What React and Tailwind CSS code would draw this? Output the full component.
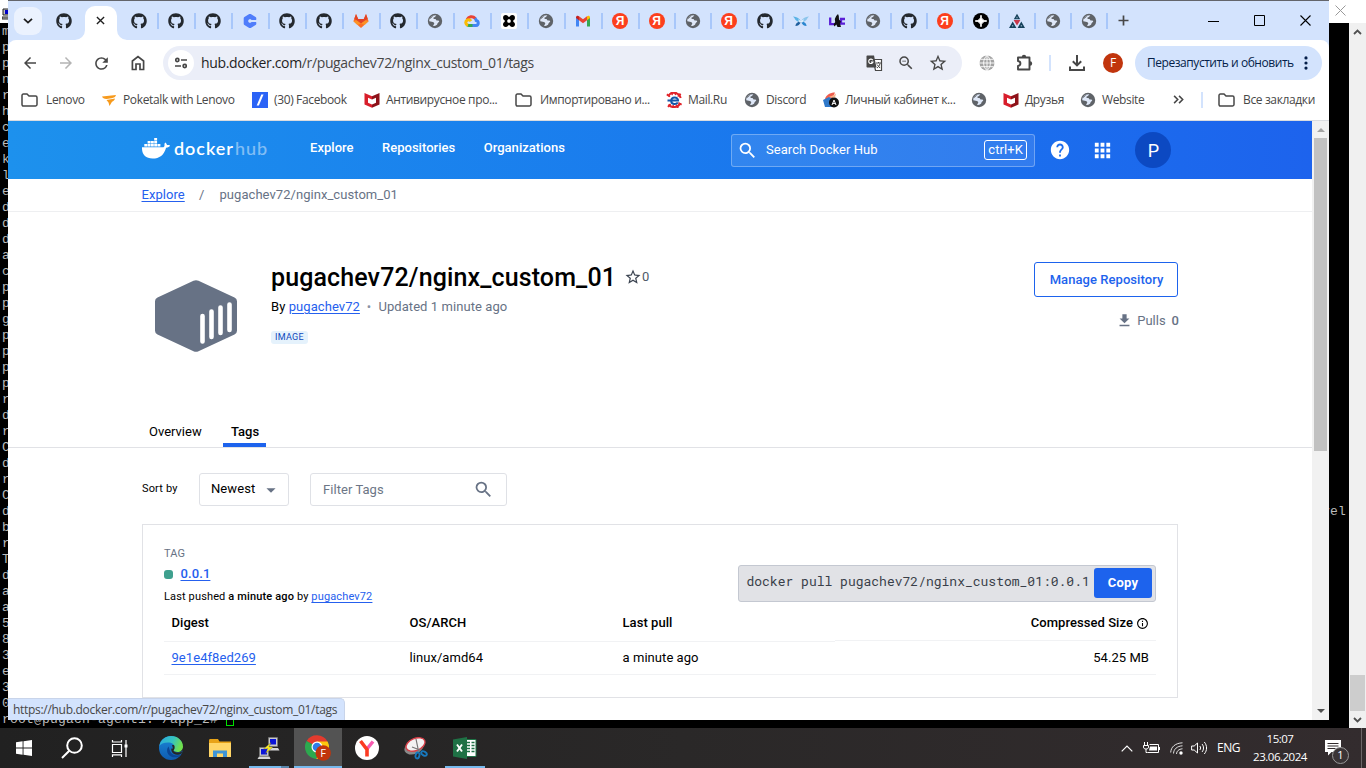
import React from "react";
import { FaGithub } from "react-icons/fa";
import {
  MdArrowBack, MdArrowForward, MdRefresh, MdZoomOut, MdStarOutline,
  MdSearch, MdHelp, MdApps, MdFileDownload, MdArrowDropDown, MdInfoOutline,
} from "react-icons/md";

const ui = "font-['Open_Sans','Noto_Sans',sans-serif]";

/* ---------- favicons ---------- */
const Github = () => <FaGithub className="size-4 text-[#24292f]" />;

const Globe = () => (
  <svg viewBox="0 0 16 16" className="size-4 shrink-0">
    <circle cx="8" cy="8" r="7.2" fill="#5f6368" />
    <path d="M9.600 2.300C8.400 2.600 8.800 3.600 8 4c-.9.300-1.700.4-1.600 1.300.1.800 1.200.6 1.900.8.800.3.700 1.200 1.500 1.400.9.200 2-.2 2.300.6.300 1-.7 1.300-1.300 1.900-.6.700-.4 1.700-1.300 2.100-.9.500-1.900 1.100-2.900.9-.9-.3-.2-1.100.2-1.600.5-.6.7-1.400 0-1.900C5.700 8.700 4 9 2.300 8.300 1.900 5 5 1.700 9.600 2.300z" fill="#dfe8f8" />
    <path d="M2.600 6.200c.8-.3 1.300-.9 1.900-1.500.5-.6 1-1 1.700-1.300-.9-.5-3.300.8-3.600 2.800z" fill="#5f6368" />
  </svg>
);

const Coursera = () => (
  <svg viewBox="0 0 16 16" className="size-4">
    <path d="M8 2.400 12.800 5.200v1L10 6.600 8 5.500 5.800 6.800v2.500L8 10.500l2-1.100 2.800.4v1L8 13.600l-4.800-2.800V5.200z" fill="#4f7dfb" stroke="#4f7dfb" strokeWidth="3" strokeLinejoin="round" />
    <path d="M8 6 9.700 7H16v2H9.700L8 10 6.300 9V7z" fill="#d3e3fd" />
  </svg>
);

const Gitlab = () => (
  <svg viewBox="0 0 16 16" className="size-4">
    <path d="M3 1 5.200 6h5.600L13 1l2.600 7.200L8 15 .4 8.200z" fill="#fc6d26" />
    <path d="M3 1 5.200 6h5.600L13 1l1.700 4.700L8 10.500 1.300 5.700z" fill="#e24329" />
    <path d="M.4 8.200 3.600 7.300 8 10.500 4.300 12z" fill="#fca326" opacity=".7" />
    <path d="M15.600 8.200 12.400 7.300 8 10.500l3.700 1.500z" fill="#fca326" opacity=".7" />
  </svg>
);

const GCloud = () => (
  <svg viewBox="0 0 16 16" className="size-4">
    <g fill="none" strokeWidth="3">
      <path d="M3.200 6.400C4.500 3.700 8.500 2.400 11.300 5.600" stroke="#ea4335" />
      <path d="M11 5.300c.8.800 1.100 1.500 1.200 2.200 2.600.3 2.900 4.700-.2 5H8" stroke="#4285f4" />
      <path d="M8.500 12.500H5c-.7 0-1.400-.2-1.900-.6" stroke="#34a853" />
      <path d="M4 12.300C1.300 11.500.9 8 3.600 7c1.300-.4 2.600 0 3.400 1.200" stroke="#fbbc04" />
    </g>
  </svg>
);

const Knot = () => (
  <svg viewBox="0 0 16 16" className="size-4">
    <rect width="16" height="16" rx="2" fill="#fff" />
    <path d="M5 5h6v6H5z" fill="none" stroke="#000" strokeWidth="2.600" />
    <circle cx="4.700" cy="4.700" r="2.600" fill="#000" /><circle cx="11.300" cy="4.700" r="2.600" fill="#000" />
    <circle cx="4.700" cy="11.300" r="2.600" fill="#000" /><circle cx="11.300" cy="11.300" r="2.600" fill="#000" />
  </svg>
);

const Gmail = () => (
  <svg viewBox="0 0 16 16" className="size-4">
    <path d="M1 13.500V4h3v9.500z" fill="#4285f4" />
    <path d="M12 13.500V4h3v9.500z" fill="#34a853" />
    <path d="M4 3.200 8 6.300l4-3.100v4L8 10.300 4 7.200z" fill="#ea4335" />
    <path d="M1 4.500C1 2.600 2.800 2.200 4 3.200v4L1 5z" fill="#c5221f" />
    <path d="M15 4.500c0-1.900-1.800-2.300-3-1.300v4L15 5z" fill="#fbbc04" />
  </svg>
);

const Yandex = () => (
  <span className="flex size-4 items-center justify-center rounded-full bg-[#fc3f1d] font-['Liberation_Sans',sans-serif] text-[12px] leading-4 font-bold text-white">Я</span>
);

const Butterfly = () => (
  <svg viewBox="0 0 16 16" className="size-4">
    <path d="M8 8.500C6.500 5.500 4 3.300 0 3.400c1.500 1 2 3 3.200 4.200C4.800 9 6.500 9 8 8.500z" fill="#5bb3e6" />
    <path d="M8 8.500C9.500 5.500 12 3.300 16 3.400c-1.500 1-2 3-3.200 4.200C11.200 9 9.500 9 8 8.500z" fill="#8cc5ec" />
    <path d="M8 8.500C5.500 8.500 3 9.500 2.400 13 5 13 7 11.500 8 8.500z" fill="#1f5f9e" />
    <path d="M8 8.500c2.500 0 5 1 5.600 4.500C11 13 9 11.500 8 8.500z" fill="#2a86cf" />
    <path d="M5 6.300 8 8l3-1.700L9.500 9.500h-3z" fill="#fff" opacity=".8" />
  </svg>
);

const Lc = () => (
  <svg viewBox="0 0 16 16" className="size-4">
    <path d="M1.200 4.500v6.700H6M16 6h-4v4.700h4" fill="none" stroke="#5a1fd6" strokeWidth="2.300" />
    <path d="M7.200 3 9 1l.8 2 .2 3.500L12 8.500l-1 2 1 3.500H8.500L7.300 11.500 5.500 13.500 4.600 11.500 6.200 9 5.800 6z" fill="#111" />
  </svg>
);

const Spark = () => (
  <svg viewBox="0 0 16 16" className="size-4">
    <circle cx="8" cy="8" r="8" fill="#000" />
    <path d="M8 2.200C8.300 6 10 7.700 13.800 8 10 8.300 8.300 10 8 13.800 7.700 10 6 8.300 2.200 8 6 7.700 7.700 6 8 2.200z" fill="#fff" stroke="#fff" />
  </svg>
);

const Triangles = () => (
  <svg viewBox="0 0 16 16" className="size-4">
    <path d="M8 .8l3.200 5.400H4.800zM3.700 8.600 7.400 15H0zM12.300 8.600 16 15H8.600z" fill="#16425b" />
    <path d="M4.600 7h6.800L8 12.600z" fill="#c8384a" />
    <path d="M8 3.800v1.500M3.700 12v1.500M12.300 12v1.500" stroke="#d3e3fd" strokeWidth=".7" />
  </svg>
);

/* ---------- browser chrome ---------- */
const tabsA = [Github, Github, Github, Coursera, Github, Github, Gitlab, Github, Globe, GCloud, Knot, Globe, Gmail, Yandex];
const tabsB = [Yandex, Globe, Yandex, Github, Butterfly, Lc, Globe, Github, Yandex, Spark, Triangles, Globe, Globe];

function TabStrip() {
  return (
    <div className="flex h-10 shrink-0 items-center border-t border-[#63656b] bg-[#d3e3fd]">
      <div className="ml-[6px] flex size-7 items-center justify-center rounded-[9px] bg-[#ebf2fe]">
        <svg viewBox="0 0 10 6" className="h-[6px] w-[10px]"><path d="M1 .8 5 4.600 9 .8" fill="none" stroke="#1f1f1f" strokeWidth="1.800" /></svg>
      </div>
      <div className="ml-[4px] flex w-[36px] justify-center"><Github /></div>
      <div className="relative mt-[5px] ml-[3px] flex h-[34px] w-8 items-center justify-center rounded-t-[10px] bg-white pb-[5px]">
        <svg viewBox="0 0 10 10" className="mr-[1px] size-[9px]"><path d="M1 1l8 8M9 1 1 9" stroke="#1f1f1f" strokeWidth="1.500" /></svg>
        <svg viewBox="0 0 10 10" className="absolute bottom-0 -left-[10px] size-[10px]"><path d="M10 0v10H0A10 10 0 0 0 10 0z" fill="#fff" /></svg>
        <svg viewBox="0 0 10 10" className="absolute -right-[10px] bottom-0 size-[10px]"><path d="M0 0v10h10A10 10 0 0 1 0 0z" fill="#fff" /></svg>
      </div>
      <div className="ml-[3px] flex items-center">
        {tabsA.map((Icon, i) => (
          <div key={i} className="flex h-4 w-[37px] items-center justify-center border-[#a8c7fa] pl-[1px] not-first:border-l-2 not-first:pr-[1px] not-first:pl-0"><Icon /></div>
        ))}
        {tabsB.map((Icon, i) => (
          <div key={i} className="flex h-4 w-[36px] items-center justify-center border-l-2 border-[#a8c7fa] pr-[1px]"><Icon /></div>
        ))}
        <div className="flex h-4 w-[36px] items-center justify-center border-l-2 border-[#a8c7fa] pr-[3px]">
          <svg viewBox="0 0 11 11" className="size-[11px]"><path d="M5.500.5v10M.5 5.500h10" stroke="#474747" strokeWidth="1.700" /></svg>
        </div>
      </div>
      <div className="mr-[18px] ml-auto flex items-center gap-[35px] text-black">
        <svg viewBox="0 0 11 11" className="size-[11px]"><path d="M0 6.500h11" stroke="currentColor" /></svg>
        <svg viewBox="0 0 11 11" className="size-[11px]"><path d="M.5.5h10v10H.5z" fill="none" stroke="currentColor" /></svg>
        <svg viewBox="0 0 11 11" className="size-[11px]"><path d="M.5.5l10 10M10.500.5l-10 10" stroke="currentColor" strokeWidth="1.100" /></svg>
      </div>
    </div>
  );
}

function Toolbar() {
  return (
    <div className="flex h-[46px] shrink-0 items-center bg-[#d3e3fd]">
      <div className="flex h-full grow items-center rounded-t-[8px] bg-white text-[#474747]">
        <MdArrowBack className="ml-[13px] size-[18px]" />
        <MdArrowForward className="ml-[18px] size-[18px] text-[#b4b4b4]" />
        <MdRefresh className="mr-[1px] ml-[17px] size-[19px]" />
        <svg viewBox="0 0 14 16" className="ml-[19px] h-4 w-[14px]" fill="none" stroke="currentColor" strokeWidth="1.700"><path d="M1.400 14.500V6L7 1.500 12.600 6v8.500H9V9H5v5.500z" /></svg>
        <div className="ml-[18px] flex h-[34px] w-[799px] items-center rounded-full bg-[#ebeef8]">
          <span className="ml-[5px] flex size-[26px] items-center justify-center rounded-full bg-white">
            <svg viewBox="0 0 12 12" className="size-3" fill="none" stroke="currentColor" strokeWidth="1.700"><circle cx="2.300" cy="3" r="1.600" /><path d="M6 3h6M0 9h6" /><circle cx="9.700" cy="9" r="1.600" /></svg>
          </span>
          <span className={`ml-[7px] pb-[1px] text-[14px] tracking-[-0.36px] whitespace-nowrap text-[#474747] ${ui}`}><span className="text-[#1f1f1f]">hub.docker.com</span>/r/pugachev72/nginx_custom_01/tags</span>
          <svg viewBox="0 0 17 17" className="ml-auto size-[17px]">
            <path d="M7 4.500h8.500v11H9.500z" fill="#fff" stroke="#474747" strokeWidth="1.200" />
            <path d="M1.500.5H8l2.500 12h-9c-.6 0-1-.4-1-1v-10c0-.6.4-1 1-1z" fill="#474747" />
            <path d="M6.800 5.200A2.200 2.200 0 1 0 7 7H5" fill="none" stroke="#fff" strokeWidth="1.100" />
            <path d="M10 8h5M12.500 7v1M11 9.500l3 3.500M14 8.500c-.5 2-1.500 3.500-3 4.500" fill="none" stroke="#474747" />
          </svg>
          <MdZoomOut className="ml-[14px] size-[18px]" />
          <MdStarOutline className="mr-[14px] ml-[13px] size-5" />
        </div>
        <svg viewBox="0 0 16 16" className="ml-[17px] size-4"><circle cx="8" cy="8" r="7.500" fill="#a3a3a3" /><path d="M8 0v16M0 8h16M1.500 4.300h13M1.500 11.700h13M8 .5C3.500 4 3.500 12 8 15.500M8 .5c4.500 3.500 4.500 11.500 0 15" fill="none" stroke="#fff" strokeWidth=".9" /></svg>
        <svg viewBox="0 0 18 18" className="ml-[21px] size-[18px]" fill="none" stroke="currentColor" strokeWidth="1.900"><path d="M2 3.500h11.500V15.500H2V12c1.500-.2 2.400-1.200 2.400-2.500S3.500 7.200 2 7z" strokeLinejoin="round" /><path d="M5.800 3a2.200 2.200 0 0 1 4.400 0zM14 7.300a2.200 2.200 0 0 1 0 4.400z" fill="currentColor" stroke="none" /></svg>
        <span className="ml-[15px] h-4 w-[2px] bg-[#d3e3fd]" />
        <svg viewBox="0 0 16 16" className="ml-[18px] size-4" fill="none" stroke="currentColor" strokeWidth="2"><path d="M8 0v10M3.800 6.200 8 10.400l4.200-4.200M1 11.500V15h14v-3.500" /></svg>
        <span className={`ml-[18px] flex size-5 items-center justify-center rounded-full bg-[#c1350d] text-[12px] text-white ${ui}`}>F</span>
        <div className={`ml-[12px] flex h-[34px] w-[187px] items-center justify-between rounded-full bg-[#d3e3fd] pr-[14px] pl-3 text-[12px] tracking-[-0.45px] whitespace-nowrap text-[#041e49] ${ui}`}>
          Перезапустить и обновить
          <svg viewBox="0 0 4 14" className="h-[14px] w-1" fill="currentColor"><circle cx="2" cy="1.900" r="1.600" /><circle cx="2" cy="7" r="1.600" /><circle cx="2" cy="12.100" r="1.600" /></svg>
        </div>
      </div>
    </div>
  );
}

const Folder = () => (
  <svg viewBox="0 0 17 14" className="-ml-[1px] h-[14px] w-[17px] shrink-0"><path d="M1 2.500C1 1.600 1.600 1 2.400 1H6l2 2h6.600c.8 0 1.400.6 1.400 1.400v7.200c0 .8-.6 1.400-1.400 1.400H2.400C1.600 13 1 12.400 1 11.600z" fill="none" stroke="#474747" strokeWidth="1.500" /></svg>
);
const Poke = () => (
  <svg viewBox="0 0 16 16" className="size-4 shrink-0"><path d="M1 4.500 15 3c-.4 1.800-2 3-4.500 3.200L5.500 7C3 7 1.500 6 1 4.500z" fill="#f79a1c" /><path d="M5.500 8 14 6.500c-.5 1.700-1.500 2.600-3 3.200L8.500 14 7.500 10.500z" fill="#f79a1c" /></svg>
);
const Slash = () => (
  <svg viewBox="0 0 16 16" className="size-4 shrink-0"><path d="M0 0h16v16H0z" fill="#2b63f6" /><path d="M9.300 2.500h2.200L6.900 13.500H4.700z" fill="#fff" /></svg>
);
const Mcafee = () => (
  <svg viewBox="0 0 16 16" className="size-4 shrink-0"><path d="M.5 1 8 4.300v3.200L4 5.700v5.100l4 1.700V15.800L.5 12.500z" fill="#d81e2b" /><path d="M15.500 1 8 4.300v3.200l4-1.800v5.100l-4 1.700v3.300l7.500-3.300z" fill="#8e1219" /></svg>
);
const MailRu = () => (
  <svg viewBox="0 0 16 16" className="size-4 shrink-0"><path d="M2 4.200A7 7 0 0 1 14.700 6M14.300 11A7 7 0 0 1 2.500 12.500" fill="none" stroke="#e2232a" strokeWidth="2" /><path d="M2 4.200A7 7 0 0 1 14.700 6M14.300 11A7 7 0 0 1 2.500 12.500" fill="none" stroke="#e2232a" strokeWidth="4" strokeDasharray="1.600 2.400" /><path d="M1.500 8.600h10.600c0-4.300-6.900-4.300-6.900.2 0 4 5 4 6.600 1.700" fill="none" stroke="#1556a8" strokeWidth="2" /></svg>
);
const Cabinet = () => (
  <svg viewBox="0 0 16 16" className="size-4 shrink-0"><path d="M2 7c1-4 5-6.500 10-6.500L9 7z" fill="#ef5c4c" /><path d="M4 5.500c3-1 6-1.500 9-4l-1 4z" fill="#f7b58e" /><path d="M0 8l6-3 5 3v7H2z" fill="#2f78c9" /><circle cx="11" cy="10.500" r="5" fill="#111" /><path d="M9 13l2-5 2 5M9.800 11.400h2.400" fill="none" stroke="#fff" /></svg>
);

const bookmarks = [
  [Folder, "Lenovo", "w-[79px]", "gap-[8px]"],
  [Poke, "Poketalk with Lenovo", "w-[151px]", "gap-[6px]"],
  [Slash, "(30) Facebook", "w-[112px]", "gap-[6px]"],
  [Mcafee, "Антивирусное про...", "w-[152px]", "gap-[6px]"],
  [Folder, "Импортировано и...", "w-[150px]", "gap-[8px]"],
  [MailRu, "Mail.Ru", "w-[78px]", "gap-[6px]"],
  [Globe, "Discord", "w-[79px]", "gap-[6px]"],
  [Cabinet, "Личный кабинет к...", "w-[148px]", "gap-[6px]"],
  [Globe, "", "w-[32px]", "gap-0"],
  [Mcafee, "Друзья", "w-[77px]", "gap-[6px]"],
  [Globe, "Website", "w-[92px]", "gap-[6px]"],
];

function Bookmarks() {
  return (
    <div className={`flex h-[35px] shrink-0 items-center border-b border-[#dadce0] bg-white pb-[7px] text-[12px] whitespace-nowrap text-[#474747] tracking-[-0.36px] ${ui}`}>
      <div className="ml-[14px] flex">
        {bookmarks.map(([Icon, label, w, gap], i) => (
          <div key={i} className={`flex shrink-0 items-center ${w} ${gap}`}><Icon />{label}</div>
        ))}
      </div>
      <svg viewBox="0 0 10 8" className="ml-[1px] h-[9px] w-[11px]" fill="none" stroke="#474747" strokeWidth="1.400"><path d="M1 .7 4.300 4 1 7.300M5.500.7 8.800 4 5.500 7.300" /></svg>
      <span className="ml-[17px] h-4 w-[2px] bg-[#d3e3fd]" />
      <span className="ml-[16px] flex items-center gap-[8px]"><Folder />Все закладки</span>
    </div>
  );
}

/* ---------- page ---------- */
const Whale = () => (
  <svg viewBox="0 0 28 22" className="h-[22px] w-7" fill="#fff">
    <path d="M0 10.200h20.600c1.300 0 2-.7 1.900-2-.1-1-.1-1.900.7-2.800 1.100.8 1.700 1.600 1.800 2.700 1.100-.2 2.300-.1 3 .4-.5 1.400-1.900 2.200-3.900 2.200C22 18 17.600 21.500 10.500 21.500 3.500 21.500-.3 17.400 0 10.200z" />
    <path d="M2.300 7h2.900v2.500H2.300zM5.600 7h2.900v2.500H5.600zM8.900 7h2.900v2.500H8.900zM12.200 7h2.900v2.500h-2.900zM15.500 7h2.900v2.500h-2.900zM5.600 4.100h2.900v2.500H5.600zM8.900 4.100h2.900v2.500H8.900zM12.200 4.100h2.900v2.500h-2.900zM12.200 1.100h2.900v2.500h-2.900z" />
  </svg>
);

function PageHeader() {
  return (
    <header className="flex h-[58px] shrink-0 items-center bg-linear-to-r from-[#1d91ed] to-[#1d63ed] pl-[134px] text-[13px] font-medium tracking-[0.04px] text-white">
      <div className="flex w-[168px] items-center pb-[4px]">
        <Whale />
        <span className="ml-[4px] font-['Lato',sans-serif] text-[18px] leading-[22px] font-semibold tracking-[0.95px]">docker<span className="ml-[1px] font-medium opacity-45">hub</span></span>
      </div>
      <nav className="flex gap-[28.300px] pb-[4px]"><a>Explore</a><a>Repositories</a><a>Organizations</a></nav>
      <div className="ml-auto flex h-[33px] w-[304px] items-center rounded-[3px] border border-white/30 bg-white/10 pr-[7px] pl-[5px] font-normal tracking-[0.06px]">
        <MdSearch className="size-[21px]" />
        <span className="ml-[8px]">Search Docker Hub</span>
        <span className="ml-auto flex h-5 items-center rounded-[3px] border border-white px-[3px] tracking-[0.1px]">ctrl+K</span>
      </div>
      <MdHelp className="ml-[14px] size-[22px]" />
      <MdApps className="ml-[20px] size-[23px]" />
      <span className="mr-[141px] ml-[21px] flex size-9 items-center justify-center rounded-full bg-[#0c49c2] pl-[1px] text-[18px] font-normal">P</span>
    </header>
  );
}

const link = "text-[#2560ee] underline underline-offset-2";

function Hero() {
  return (
    <section className="flex h-[236px] shrink-0 flex-col border-b border-[#e1e2e6]">
      <div className="flex grow">
        <svg viewBox="0 0 82 72" className="mt-[68px] ml-[147px] h-[72px] w-[82px]">
          <path d="M38.500.8a5.500 5.500 0 0 1 5 0l36 16.700a4 4 0 0 1 2.500 3.700v29.600a4 4 0 0 1-2.500 3.700l-36 16.700a5.500 5.500 0 0 1-5 0l-36-16.700A4 4 0 0 1 0 50.800V21.200a4 4 0 0 1 2.500-3.700z" fill="#677285" />
          <path d="M47.500 36v25.500M56.500 31.500V57M65.500 27.500V53M74.500 24.500V50" stroke="#fff" strokeWidth="4.600" strokeLinecap="round" />
        </svg>
        <div className="ml-[34px] flex flex-col items-start text-[13px] leading-5">
          <div className="mt-[49px] flex h-8 items-center">
            <h1 className="pt-[1px] text-[25px] leading-8 font-medium tracking-[0.12px]">pugachev72/nginx_custom_01</h1>
            <MdStarOutline className="ml-[8px] size-[18px] text-[#3b4350]" /><span className="text-[#505a69]">0</span>
          </div>
          <p className="mt-[4px] flex tracking-[0.07px] text-black">By&nbsp;<a className={link}>pugachev72</a><span className="w-[18px] text-center text-[#8993a5]">•</span><span className="pl-[0.500px] text-[#677285]">Updated 1 minute ago</span></p>
          <span className="mt-[14px] rounded-[3px] bg-[#e5f2fc] px-[4px] text-[9px] leading-[13px] tracking-[0.28px] text-[#0f49bd]">IMAGE</span>
        </div>
        <div className="mr-[134px] ml-auto flex flex-col items-end text-[13px]">
          <button className="mt-[50px] flex h-[35px] w-[144px] items-center justify-center rounded-[3px] border border-[#1d63ed] pl-[1px] font-medium tracking-[0.06px] whitespace-nowrap text-[#1d63ed]">Manage Repository</button>
          <span className="mt-[14px] -mr-[1px] flex items-center text-[#677285]"><MdFileDownload className="mr-[4px] size-[17px]" />Pulls<span className="ml-[6px] font-medium">0</span></span>
        </div>
      </div>
      <div className="ml-[141px] flex h-[28px] text-[13px] leading-[25px]">
        <span className="w-[74px]">Overview</span>
        <span className="h-full border-b-4 border-[#1d63ed] pr-[7px] pl-[8px] font-medium">Tags</span>
      </div>
    </section>
  );
}

function TagsSection() {
  return (
    <section className="mr-[134px] ml-[134px]">
      <div className="flex h-[76px] items-center pt-[7px] text-[13px]">
        <span className="w-[57px] text-[11px] tracking-[0.16px]">Sort by</span>
        <div className="flex h-[33px] w-[90px] items-center justify-between rounded-[3px] border border-[#dfe1e6] pr-[6px] pb-[2px] pl-[11px] tracking-[0.1px]">Newest<MdArrowDropDown className="mt-[2px] size-[22px] text-[#677285]" /></div>
        <div className="ml-[21px] flex h-[33px] w-[197px] items-center justify-between rounded-[3px] border border-[#dfe1e6] pr-[12px] pl-[12px] text-[#6c7686] tracking-[0.05px]">Filter Tags<MdSearch className="size-[21px] text-[#677285]" /></div>
      </div>
      <div className="h-[174px] border border-[#e1e2e6] px-[21px] pt-[20px]">
        <div className="flex h-[62px]">
          <div className="flex grow flex-col text-[11px]">
            <span className="pt-[1px] leading-4 tracking-[0.1px] text-[#677285]">TAG</span>
            <span className="mt-[2px] flex items-center leading-5"><i className="size-[9px] rounded-[3px] bg-[#3fa08e]" /><a className={`ml-[7.500px] text-[13px] font-medium tracking-[0.1px] ${link}`}>0.0.1</a></span>
            <p className="mt-[5px] leading-4 tracking-[0.14px]">Last pushed <b className="font-medium">a minute ago</b> by <a className={link}>pugachev72</a></p>
          </div>
          <div className="mt-[20px] flex h-[37px] w-[418px] items-center justify-between rounded-[3px] border border-[#c4c8d1] bg-[#e1e2e6] pr-[3px] pb-[1px] pl-[7.500px]">
            <code className="pb-[3px] font-['Roboto_Mono','Liberation_Mono',monospace] text-[13px] tracking-[0px] whitespace-nowrap text-[#393f49]">docker pull pugachev72/nginx_custom_01:0.0.1</code>
            <span className="flex h-[30px] w-[58px] items-center justify-center rounded-[3px] bg-[#1d63ed] text-[13px] font-bold tracking-[0.2px] text-white">Copy</span>
          </div>
        </div>
        <div className="grid grid-cols-[238px_213px_220px_1fr] items-start text-[13px] tracking-[0.06px]">
          {["Digest", "OS/ARCH", "Last pull"].map((h) => <span key={h} className="h-[35px] border-b border-[#f1f2f4] pl-[7.500px] leading-[32px] font-medium">{h}</span>)}
          <span className="flex h-[34px] items-center justify-end gap-[3px] border-b border-[#f1f2f4] pr-[7px] pb-[1px] font-medium">Compressed Size<MdInfoOutline className="size-[13px]" /></span>
          <span className="h-[33px] border-b border-[#f1f2f4] pl-[7.500px] leading-[32px]"><a className={link}>9e1e4f8ed269</a></span>
          <span className="h-[33px] border-b border-[#f1f2f4] pl-[7.500px] leading-[32px]">linux/amd64</span>
          <span className="h-[33px] border-b border-[#f1f2f4] pl-[7.500px] leading-[32px]">a minute ago</span>
          <span className="h-[33px] border-b border-[#f1f2f4] pr-[7px] text-right leading-[32px]">54.25 MB</span>
        </div>
      </div>
    </section>
  );
}

function BrowserWindow() {
  return (
    <div className="absolute top-0 left-[8px] flex h-[720px] w-[1321px] flex-col overflow-hidden bg-white">
      <TabStrip /><Toolbar /><Bookmarks />
      <div className="flex min-h-0 grow">
        <main className="flex grow flex-col overflow-hidden font-['Roboto',sans-serif] text-black">
          <PageHeader />
          <div className="flex h-[33px] shrink-0 items-center border-b border-[#eeeff1] pl-[133.500px] text-[13px] tracking-[0.05px] text-[#677285]">
            <a className={`w-[57.500px] ${link}`}>Explore</a><span className="w-[20.500px]">/</span>pugachev72/nginx_custom_01
          </div>
          <Hero />
          <TagsSection />
        </main>
        <div className="flex w-[17px] shrink-0 flex-col items-center bg-[#f1f1f1]">
          <span className="flex h-[17px] items-center"><svg viewBox="0 0 8 4" className="h-1 w-2"><path d="M4 0l4 4H0z" fill="#a3a3a3" /></svg></span>
          <span className="h-[313px] w-[13px] bg-[#c1c1c1]" />
          <span className="mt-auto flex h-[18px] items-center"><svg viewBox="0 0 8 4" className="h-1 w-2"><path d="M4 4l4-4H0z" fill="#505050" /></svg></span>
        </div>
      </div>
      <div className={`absolute bottom-0 left-0 flex h-[22px] w-[337px] items-center rounded-tr-[5px] border-t border-r border-[#c8d4ea] bg-[#d3e3fd] pl-[5px] text-[12px] tracking-[-0.3px] whitespace-nowrap text-[#474747] ${ui}`}>https://hub.docker.com/r/pugachev72/nginx_custom_01/tags</div>
    </div>
  );
}

/* ---------- terminal behind the browser ---------- */
const lines = "m p p n r h c e k l e d d d a c p p g p p p p r d r C d r C d b r T d a a 5 8 3 e 3 0".split(" ");

function Terminal() {
  return (
    <div className="flex h-[728px] flex-col overflow-hidden bg-black">
      <div className="flex h-[23px] shrink-0 items-center justify-between bg-white pl-[2px]">
        <svg viewBox="0 0 8 12" className="mt-[4px] h-3 w-2"><path d="M1 7V1h7v6zM0 9h8v2H0z" fill="#c0c0c0" stroke="#222" /><path d="M3 2h5v4H3z" fill="#0000c8" /></svg>
        <svg viewBox="0 0 11 11" className="mr-[20px] mb-[3px] size-[11px]"><path d="M.5.5l10 10M10.500.5l-10 10" stroke="#999" /></svg>
      </div>
      <div className="flex min-h-0 grow justify-between font-['Liberation_Mono',monospace] text-[13px] leading-4 tracking-[0.2px] text-[#bbb]">
        <div className="pt-[1px] pl-[2px]">
          {lines.map((c, i) => <div key={i} className="h-4">{c}</div>)}
          <div className="flex h-4 whitespace-pre">root@pugach-agent1:~/app_2# <span className="h-[14px] w-[8px] border border-[#00e000]" /></div>
        </div>
        <div className="flex">
          <span className="mt-[481px] mr-[3px]">vel</span>
          <div className="flex w-[17px] flex-col items-center bg-[#f0f0f0] text-[#505050]">
            <svg viewBox="0 0 9 6" className="mt-[6px] h-[6px] w-[9px]"><path d="M1 5l3.500-3.500L8 5" fill="none" stroke="currentColor" strokeWidth="1.800" /></svg>
            <span className="mt-auto h-[36px] w-[15px] bg-[#cdcdcd]" />
            <svg viewBox="0 0 9 6" className="mt-[6px] mb-[5px] h-[6px] w-[9px]"><path d="M1 1l3.500 3.500L8 1" fill="none" stroke="currentColor" strokeWidth="1.800" /></svg>
          </div>
        </div>
      </div>
    </div>
  );
}

/* ---------- taskbar ---------- */
const WinLogo = () => <svg viewBox="0 0 16 16" className="size-4"><path d="M0 2.200 6.600 1.300v6.200H0zM7.500 1.200 16 0v7.500H7.500zM0 8.500h6.600v6.200L0 13.800zM7.500 8.500H16V16l-8.500-1.200z" fill="#fff" /></svg>;
const Search = () => <svg viewBox="0 0 22 22" className="size-[22px]" fill="none" stroke="#fff" strokeWidth="2"><circle cx="13.500" cy="8.500" r="7.300" /><path d="M8.300 13.800 1 21" /></svg>;
const TaskView = () => <svg viewBox="0 0 18 17" className="h-[17px] w-[18px]" fill="none" stroke="#fff" strokeWidth="1.200"><path d="M1.500 4.500h9v8h-9zM1.500 0v2h9V0M1.500 17v-2.200h9V17M15 0v17" /><path d="M13.500 4.500h3v3h-3z" fill="#fff" stroke="none" /></svg>;
const Edge = () => (
  <svg viewBox="0 0 24 24" className="size-6">
    <defs>
      <linearGradient id="eg1" x1="0" y1="0" x2="1" y2=".3"><stop offset="0" stopColor="#2aa8e0" /><stop offset=".6" stopColor="#36c4c0" /><stop offset="1" stopColor="#6fe04e" /></linearGradient>
      <linearGradient id="eg2" x1="0" y1="0" x2="0" y2="1"><stop offset="0" stopColor="#1b86d8" /><stop offset="1" stopColor="#0f5cb0" /></linearGradient>
    </defs>
    <circle cx="12" cy="12" r="12" fill="url(#eg2)" />
    <path d="M14.500 14.300c2 2.500 6 2.600 9.500.2V9H13z" fill="#262626" />
    <path d="M.3 10C1.500 3.800 6.500 0 12 0c7 0 12 5 12 10.500 0 3.500-2.600 5.500-5.500 5.500-2.700 0-4-1-4-1.700 0-.6 1.200-1.200 1.200-3.200C15.700 8.500 12.800 6.500 9 6.500 4.500 6.500 1.500 8.300.3 10z" fill="url(#eg1)" />
    <path d="M9.500 10.500c-3 3.500-1.200 9.700 4.500 10.700 3.300.6 6.300-.4 8.200-2.700-3.700 1.700-7.500 1-9.800-1.300-2-2-2-4.700-2.900-6.700z" fill="#0b4594" />
    <path d="M12.400 12.500c-.6 2.200.6 4.300 2.700 5.500 2.300 1.200 5.300.8 7.400-.6l1-2.400c-1.400 1.200-3.500 1.600-5.500 1.500-2.200-.2-3.300-1-3.500-1.800-.1-.6.600-1.300 1-2.200z" fill="#262626" />
  </svg>
);
const Explorer = () => <svg viewBox="0 0 22 19" className="h-[19px] w-[22px]"><path d="M0 1.500C0 .7.500 0 1.300 0H9l1.500 2.500H22V18H0z" fill="#e8a317" /><path d="M0 4h22v14H0z" fill="#ffd667" /><path d="M4 18v-6.500h14V18h-4v-3.500H8V18z" fill="#3f95d6" /></svg>;
const Putty = () => (
  <svg viewBox="0 0 24 24" className="size-6">
    <path d="M11.500 1.500h9v9h-9z" fill="#c9c9c9" stroke="#777" strokeWidth=".6" /><path d="M13 3h6v5.500h-6z" fill="#0a14d8" /><path d="M11 12h10l1.500 2.500H10z" fill="#d6d6d6" />
    <path d="M2.500 11.500h9v8.500h-9z" fill="#c9c9c9" stroke="#777" strokeWidth=".6" /><path d="M4 13h6v5.500H4z" fill="#0a14d8" /><path d="M2 20.500h10.500l1 2.500H.5z" fill="#d6d6d6" />
    <path d="M14 6.500 6.500 13l4.500-.5-2.500 5 7.500-6.500-4-.1z" fill="#ffee1a" stroke="#555" strokeWidth=".4" />
  </svg>
);
const Chrome = () => (
  <svg viewBox="0 0 26 26" className="size-[26px]">
    <path d="M12 12 1.600 6A12 12 0 0 1 22.400 6.500L22 7z" fill="#e33b2e" /><path d="M12 12 1.600 6a12 12 0 0 0 9.600 18L17 15z" fill="#2da94f" /><path d="M12 12V6.500h10.600A12 12 0 0 1 11.200 24l6-9z" fill="#fdc80f" />
    <circle cx="12" cy="12" r="5.500" fill="#fff" /><circle cx="12" cy="12" r="4.300" fill="#2f7de9" />
    <circle cx="18.200" cy="18" r="7.700" fill="#c1350d" />
    <text x="18.200" y="22" textAnchor="middle" fontSize="11" fill="#fff" fontFamily="Open Sans">F</text>
  </svg>
);
const YaBrowser = () => (
  <svg viewBox="0 0 24 24" className="size-6">
    <circle cx="12" cy="12" r="12" fill="#fff" /><path d="M11.500 13.500 18 5.500" stroke="#f65bb0" strokeWidth="3.400" /><path d="M5.500 5 12 13.500V20.500" fill="none" stroke="#fb3b22" strokeWidth="3.600" /></svg>
);
const Snip = () => (
  <svg viewBox="0 0 24 24" className="size-6"><ellipse cx="10" cy="11.500" rx="10" ry="6.500" transform="rotate(-22 10 11.500)" fill="#8a8a8a" /><ellipse cx="11.500" cy="8.500" rx="10" ry="6" transform="rotate(-22 11.500 8.500)" fill="#f3f3f3" stroke="#d8414a" strokeWidth="1.400" />
    <path d="M12 3l2.500 12M8 11l8 3" stroke="#777" strokeWidth="1.200" /><g fill="none" stroke="#1878bd" strokeWidth="1.900"><ellipse cx="13.500" cy="19.500" rx="1.900" ry="3" transform="rotate(15 13.500 19.500)" /><ellipse cx="20" cy="17.500" rx="3" ry="1.900" transform="rotate(30 20 17.500)" /></g></svg>
);
const Excel = () => (
  <svg viewBox="0 0 24 22" className="h-[22px] w-6"><path d="M12 2.500h11v17H12z" fill="#fff" stroke="#1f7145" /><path d="M14 5.500h3M18.500 5.500h3M14 8.500h3M18.500 8.500h3M14 11.500h3M18.500 11.500h3M14 14.500h3M18.500 14.500h3" stroke="#1f7145" strokeWidth="1.500" /><path d="M0 2.500 14 0v22L0 19.500z" fill="#1f7145" /><path d="M4 7.500l5 7M9 7.500l-5 7" stroke="#fff" strokeWidth="1.900" /></svg>
);

function Taskbar() {
  const cell = "flex h-full items-center justify-center";
  return (
    <div className={`flex h-10 items-center bg-linear-to-r from-[#212121] via-[#2a2828] to-[#332c2e] text-white ${ui}`}>
      <div className={`${cell} w-12`}><WinLogo /></div>
      <div className={`${cell} w-12`}><Search /></div>
      <div className={`${cell} w-12`}><TaskView /></div>
      <div className={`${cell} w-[54px]`}><Edge /></div>
      <div className={`${cell} w-[44px]`}><Explorer /></div>
      <div className={`${cell} ml-[7px] w-[32px] border-b-2 border-[#76b9ed] pt-[2px] pl-[8px]`}><Putty /></div>
      <div className="h-full w-[8px] border-b-2 border-[#5885aa]" />
      <div className={`${cell} ml-[5px] w-12 border-b-2 border-[#76b9ed] bg-[#535353] pt-[2px]`}><Chrome /></div>
      <div className={`${cell} w-[50px]`}><YaBrowser /></div>
      <div className={`${cell} w-[48px]`}><Snip /></div>
      <div className={`${cell} ml-[5px] w-[40px] border-b-2 border-[#76b9ed] pt-[2px]`}><Excel /></div>
      <svg viewBox="0 0 12 7" className="ml-auto h-[7px] w-3"><path d="M.7 6.300 6 1l5.300 5.300" fill="none" stroke="#fff" strokeWidth="1.200" /></svg>
      <svg viewBox="0 0 17 12" className="ml-[10px] h-3 w-[17px]" fill="none" stroke="#fff"><path d="M1.500 0v3M4.500 0v3M.5 3.500h5v1.500c0 1.500-1 2-2.500 2s-2.500-.5-2.500-2zM3 7v3.500h1.500M6.500 2.500h9v8h-11M16.500 5v3" /><path d="M7 4.500h7v4H6z" fill="#fff" stroke="none" /></svg>
      <svg viewBox="0 0 13 13" className="ml-[10px] h-[13px] w-[13px]" fill="none" stroke="#fff"><path d="M.7 10.500C1 5 5 1.200 12.500.8M3.500 11.500C3.800 7 7 4.200 12.500 3.800M6.500 12C6.800 9 8.500 7.200 12.500 6.800" opacity=".85" /><circle cx="11" cy="11" r="1.700" fill="#fff" stroke="none" /></svg>
      <svg viewBox="0 0 17 14" className="ml-[8px] h-[14px] w-[17px]" fill="none" stroke="#fff"><path d="M.6 5v4h2.600L6.500 12V2L3.200 5zM8.800 5c1 1.200 1 2.800 0 4M11 3c2 2.300 2 5.700 0 8M13.300 1c3 3.500 3 8.500 0 12" /></svg>
      <span className="ml-[9px] w-[36px] text-[12px] tracking-[-0.45px]">ENG</span>
      <div className="w-[54px] text-center text-[11.500px] leading-[18px] tracking-[-0.48px] whitespace-nowrap"><div>15:07</div><div>23.06.2024</div></div>
      <div className="relative mr-[4px] ml-[18px] flex h-full w-[37px] items-center border-r border-[#6c6668]">
        <svg viewBox="0 0 16 16" className="size-4"><path d="M0 0h16v12H6.500L3 15.500V12H0z" fill="#fff" /><path d="M2.500 3.500h11M2.500 6h11M2.500 8.500h8" stroke="#332c2e" /></svg>
        <span className="absolute top-[19px] left-[7px] flex size-[17px] items-center justify-center rounded-full border border-[#999] bg-[#3a3436] text-[11px]">1</span>
      </div>
    </div>
  );
}

export default function App() {
  return (
    <div className="relative flex h-[768px] w-[1366px] flex-col overflow-hidden">
      <Terminal />
      <BrowserWindow />
      <Taskbar />
    </div>
  );
}
